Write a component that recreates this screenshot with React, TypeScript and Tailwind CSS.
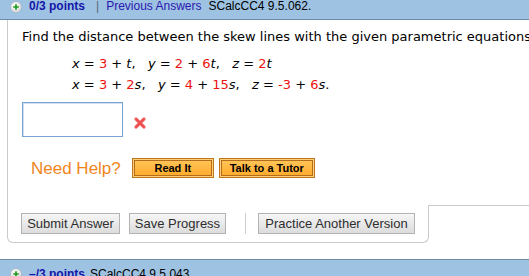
import React from "react";

const PlusIcon = () => (
  <svg width="12" height="12" viewBox="0 0 12 12" className="shrink-0">
    <defs>
      <radialGradient id="pg" cx="40%" cy="35%" r="70%">
        <stop offset="0%" stopColor="#ffffff" />
        <stop offset="100%" stopColor="#d9d9d9" />
      </radialGradient>
    </defs>
    <circle cx="6" cy="6" r="5.5" fill="url(#pg)" stroke="#a8b4bf" strokeWidth="0.8" />
    <path d="M6 3.2v5.6M3.2 6h5.6" stroke="#1e9a1e" strokeWidth="1.7" />
  </svg>
);

const RedX = () => (
  <svg width="14" height="14" viewBox="0 0 14 14" className="shrink-0">
    <path d="M3 3L11 11M11 3L3 11" stroke="#f47c7c" strokeWidth="3.4" strokeLinecap="round" />
    <path d="M3 3L11 11M11 3L3 11" stroke="#ee4c4c" strokeWidth="1.8" strokeLinecap="round" />
  </svg>
);

const OrangeButton = ({ label, w }: { label: string; w: string }) => (
  <div className={`h-[20px] ${w} border border-[#c0741c] bg-[#ffd07a] p-[1px] flex`}>
    <div className="flex-1 border border-[#b36b1c] bg-gradient-to-b from-[#ffc455] to-[#ffac2c] flex items-center justify-center text-[11px] font-bold text-black leading-none">
      {label}
    </div>
  </div>
);

const GrayButton = ({ label, w }: { label: string; w: string }) => (
  <div className={`h-[21px] ${w} border border-[#b3b3b3] bg-gradient-to-b from-[#f6f6f6] to-[#dcdcdc] flex items-center justify-center text-[13px] text-[#2e2e2e] leading-none`}>
    {label}
  </div>
);

const R = ({ children }: { children: React.ReactNode }) => (
  <span className="text-[#ee1111]">{children}</span>
);

export default function App() {
  return (
    <div className="w-[529px] h-[276px] overflow-hidden bg-white font-['Liberation_Sans',Arial,sans-serif]">
      {/* Header */}
      <div className="h-[20px] bg-[#9ec3e2] border-b border-[#6e8ca6] flex items-start pl-[10px] text-[12px] leading-[13px]">
        <div className="flex items-center h-[13px]">
          <PlusIcon />
          <span className="ml-[7px] font-bold text-[#1515a8]">0/3 points</span>
          <span className="ml-[11px] text-[#5a6a78]">|</span>
          <span className="ml-[7px] text-[#2b17b0]">Previous Answers</span>
          <span className="ml-[7px] text-black">SCalcCC4 9.5.062.</span>
        </div>
      </div>

      {/* Question */}
      <div className="ml-[7px] flex flex-col">
        <div className="border-l border-[#cacaca] pl-[14px] pt-[9px] pb-[27px]">
          <div className="font-['DejaVu_Sans',Verdana,sans-serif] text-[13px] leading-[16px] text-black whitespace-nowrap">
            Find the distance between the skew lines with the given parametric equations.
          </div>
          <div className="mt-[8px] ml-[50px] font-['DejaVu_Sans',Verdana,sans-serif] text-[13px] leading-[21px] text-black whitespace-pre">
            <div>
              <i>x</i> = <R>3</R> + <i>t</i>,   <i>y</i> = <R>2</R> + <R>6</R><i>t</i>,   <i>z</i> = <R>2</R><i>t</i>
            </div>
            <div>
              <i>x</i> = <R>3</R> + <R>2</R><i>s</i>,   <i>y</i> = <R>4</R> + <R>15</R><i>s</i>,   <i>z</i> = <R>-3</R> + <R>6</R><i>s</i>.
            </div>
          </div>
          <div className="mt-[7px] flex items-center">
            <div className="w-[101px] h-[35px] border border-[#7aa2d2] shadow-[inset_1px_1px_0_#cfe0f3] bg-white" />
            <div className="ml-[10px] mt-[7px]">
              <RedX />
            </div>
          </div>
          <div className="mt-[21px] h-[20px] flex items-center pl-[9px]">
            <span className="text-[17px] leading-none text-[#f0861c]">Need Help?</span>
            <div className="ml-[11px] flex gap-[5px]">
              <OrangeButton label="Read It" w="w-[82px]" />
              <OrangeButton label="Talk to a Tutor" w="w-[96px]" />
            </div>
          </div>
        </div>

        {/* Bottom buttons row */}
        <div className="flex">
          <div className="border-l border-b border-r border-[#cacaca] rounded-bl-[6px] rounded-br-[6px] pl-[13px] pr-[13px] pt-[8px] pb-[8px] flex items-center">
            <GrayButton label="Submit Answer" w="w-[99px]" />
            <div className="ml-[9px]">
              <GrayButton label="Save Progress" w="w-[97px]" />
            </div>
            <div className="ml-[19px] w-px h-[21px] bg-[#cfcfcf]" />
            <div className="ml-[12px]">
              <GrayButton label="Practice Another Version" w="w-[157px]" />
            </div>
          </div>
          <div className="flex-1 border-t border-[#cacaca]" />
        </div>
      </div>

      {/* Next question header */}
      <div className="mt-[16px] bg-[#9ec3e2] border-t border-[#6e8ca6] h-[40px] pl-[10px] pt-[7px] text-[12px] leading-[14px]">
        <div className="flex items-center">
          <PlusIcon />
          <span className="ml-[7px] font-bold text-[#1515a8]">–/3 points</span>
          <span className="ml-[5px] text-black">SCalcCC4 9.5.043.</span>
        </div>
      </div>
    </div>
  );
}
